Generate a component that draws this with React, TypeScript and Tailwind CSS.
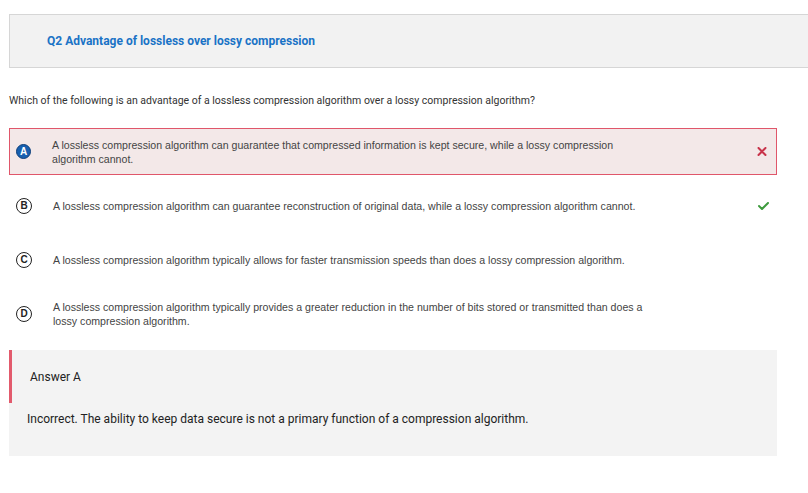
import { ReactNode } from 'react';

const roboto = { fontFamily: 'Roboto, "Liberation Sans", sans-serif' };

function Letter({ letter, active }: { letter: string; active?: boolean }) {
  if (active) {
    return (
      <span className="flex h-[15px] w-[15px] shrink-0 items-center justify-center rounded-full border border-[#0e3f7a] bg-[#1760b0] text-[10px] font-bold leading-none text-white">
        {letter}
      </span>
    );
  }
  return (
    <span className="flex h-[16px] w-[16px] shrink-0 items-center justify-center rounded-full border-[1.5px] border-[#222] text-[10px] font-bold leading-none text-[#222]">
      {letter}
    </span>
  );
}

function Cross() {
  return (
    <svg width="10" height="9" viewBox="0 0 10 9">
      <path d="M1.5 1 L8.5 8 M8.5 1 L1.5 8" stroke="#c8334a" strokeWidth="2" strokeLinecap="round" />
    </svg>
  );
}

function Check() {
  return (
    <svg width="11" height="8" viewBox="0 0 11 8">
      <path d="M1 4 L4 7 L10 1" stroke="#3e9b3e" strokeWidth="2" fill="none" strokeLinecap="round" strokeLinejoin="round" />
    </svg>
  );
}

function Option({ letter, selected, mark, children }: { letter: string; selected?: boolean; mark?: ReactNode; children: ReactNode }) {
  return (
    <div
      className={`flex h-[47px] w-[768px] items-center border pl-[6px] ${selected ? 'border-[#e0566a] bg-[#f3e8e8]' : 'border-transparent'}`}
    >
      <Letter letter={letter} active={selected} />
      <p className="ml-[21px] w-[600px] text-[10.6px] leading-[14px] text-[#444]">{children}</p>
      <div className="ml-[104px] flex w-[12px] justify-center">{mark}</div>
    </div>
  );
}

export default function App() {
  return (
    <div className="h-[493px] w-[808px] overflow-hidden bg-white pl-[9px] pt-[14px]" style={{ fontFamily: '"Liberation Sans", Arial, sans-serif' }}>
      <div className="flex h-[54px] w-[820px] items-center border border-[#d6d6d6] bg-[#f2f2f2] pl-[37px]">
        <h2 className="text-[12px] font-bold text-[#1a73c6]" style={roboto}>
          Q2 Advantage of lossless over lossy compression
        </h2>
      </div>
      <p className="mt-[26px] text-[10.5px] leading-[14px] text-[#333]" style={roboto}>
        Which of the following is an advantage of a lossless compression algorithm over a lossy compression algorithm?
      </p>
      <div className="mt-[20px] flex flex-col gap-[7px]">
        <Option letter="A" selected mark={<Cross />}>
          A lossless compression algorithm can guarantee that compressed information is kept secure, while a lossy compression algorithm cannot.
        </Option>
        <Option letter="B" mark={<Check />}>
          A lossless compression algorithm can guarantee reconstruction of original data, while a lossy compression algorithm cannot.
        </Option>
        <Option letter="C">
          A lossless compression algorithm typically allows for faster transmission speeds than does a lossy compression algorithm.
        </Option>
        <Option letter="D">
          A lossless compression algorithm typically provides a greater reduction in the number of bits stored or transmitted than does a lossy compression algorithm.
        </Option>
      </div>
      <div className="mt-[13px] h-[106px] w-[768px] bg-[#f3f3f3]" style={roboto}>
        <div className="flex h-[53px] items-center border-l-[3px] border-[#e25a6c] pl-[18px] text-[12px] text-[#222]">
          Answer A
        </div>
        <p className="mt-[9px] pl-[18px] text-[12px] leading-[14px] text-[#222]">
          Incorrect. The ability to keep data secure is not a primary function of a compression algorithm.
        </p>
      </div>
    </div>
  );
}
